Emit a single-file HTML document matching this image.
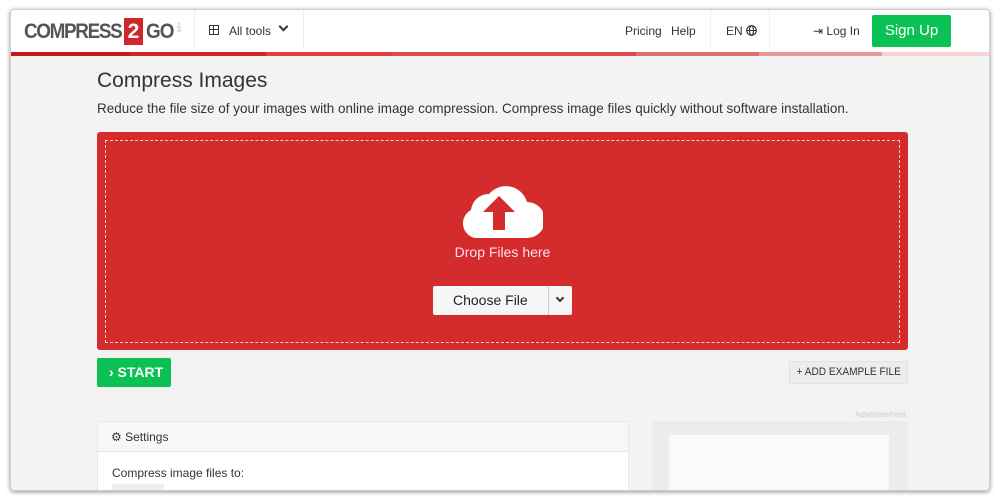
<!DOCTYPE html>
<html><head><meta charset="utf-8"><style>
*{box-sizing:border-box;margin:0;padding:0}
body{width:1000px;height:500px;background:#fff;font-family:"Liberation Sans",sans-serif;position:relative;overflow:hidden}
.win{position:absolute;left:10px;top:9px;width:980px;height:482px;background:#f3f3f3;border:1px solid #cfcfcf;border-radius:4px;overflow:hidden;box-shadow:0 1px 4px rgba(0,0,0,.45)}
.hdr{position:absolute;left:0;top:0;width:980px;height:42px;background:#fff}
.bar{position:absolute;top:42px;height:4px}
.a{position:absolute;white-space:nowrap}
</style></head><body>
<div class="win">
<div class="hdr">
 <div class="a" style="left:13px;top:10px;font-size:21px;font-weight:bold;color:#555;letter-spacing:-1.5px;transform:scaleX(.9);transform-origin:left">COMPRESS</div>
 <div class="a" style="left:113px;top:8px;width:19px;height:27px;background:#d0282a;color:#fff;font-weight:bold;font-size:21px;text-align:center;line-height:27px">2</div>
 <div class="a" style="left:135px;top:10px;font-size:21px;font-weight:bold;color:#555;letter-spacing:-1px;transform:scaleX(.9);transform-origin:left">GO</div>
 <div class="a" style="left:162px;top:14px;font-size:5px;color:#aaa;transform:rotate(90deg)">.com</div>
 <div class="a" style="left:183px;top:0;width:1px;height:38px;background:#eee"></div>
 <div class="a" style="left:198px;top:15px;width:10px;height:10px;border:1px solid #333"></div>
 <div class="a" style="left:202px;top:15px;width:1px;height:10px;background:#333"></div>
 <div class="a" style="left:198px;top:19px;width:10px;height:1px;background:#333"></div>
 <div class="a" style="left:218px;top:14px;font-size:12px;color:#333">All tools</div>
 <div class="a" style="left:269px;top:13px;width:7px;height:7px;border-right:2px solid #333;border-bottom:2px solid #333;transform:rotate(45deg)"></div>
 <div class="a" style="left:292px;top:0;width:1px;height:38px;background:#eee"></div>
 <div class="a" style="left:614px;top:14px;font-size:12px;color:#333">Pricing</div>
 <div class="a" style="left:660px;top:14px;font-size:12px;color:#333">Help</div>
 <div class="a" style="left:699px;top:0;width:1px;height:38px;background:#eee"></div>
 <div class="a" style="left:715px;top:14px;font-size:12px;color:#333">EN</div>
 <svg class="a" style="left:735px;top:15px" width="11" height="11" viewBox="0 0 11 11" fill="none" stroke="#333" stroke-width="1.1"><circle cx="5.5" cy="5.5" r="4.8"/><ellipse cx="5.5" cy="5.5" rx="2" ry="4.8"/><path d="M0.7 5.5H10.3"/></svg>
 <div class="a" style="left:758px;top:0;width:1px;height:38px;background:#eee"></div>
 <div class="a" style="left:802px;top:14px;font-size:12px;color:#333">⇥ Log In</div>
 <div class="a" style="left:861px;top:5px;width:79px;height:32px;background:#0cc153;border-radius:2px;color:#fff;font-size:15px;text-align:center;line-height:32px">Sign Up</div>
</div>
<div class="bar" style="left:0;width:120px;background:#c8181c"></div>
<div class="bar" style="left:120px;width:135px;background:#d42226"></div>
<div class="bar" style="left:255px;width:125px;background:#e03e3e"></div>
<div class="bar" style="left:380px;width:245px;background:#e04a4a"></div>
<div class="bar" style="left:625px;width:123px;background:#e07070"></div>
<div class="bar" style="left:748px;width:123px;background:#e89a9a"></div>
<div class="bar" style="left:871px;width:109px;background:#f6d4d4"></div>
<div class="a" style="left:86px;top:59px;font-size:21px;color:#333">Compress Images</div>
<div class="a" style="left:86px;top:90px;font-size:14px;color:#333;transform:scaleX(.962);transform-origin:left">Reduce the file size of your images with online image compression. Compress image files quickly without software installation.</div>
<div class="a" style="left:86px;top:122px;width:811px;height:218px;background:#d42b2d;border-radius:3px">
 <div class="a" style="left:8px;top:8px;width:795px;height:203px;border:1px dashed rgba(255,255,255,.75)"></div>
 <svg class="a" style="left:362px;top:48px" width="84" height="60" viewBox="0 0 84 60">
  <path d="M16 58 A15 15 0 0 1 12 30 A18 18 0 0 1 30 14 A22 22 0 0 1 68 22 A18 18 0 0 1 68 58 Z" fill="#fff"/>
  <path d="M40 16 L56 32 L46 32 L46 50 L34 50 L34 32 L24 32 Z" fill="#d42b2d"/>
 </svg>
 <div class="a" style="left:0;width:811px;text-align:center;top:112px;font-size:14px;color:#fde">Drop Files here</div>
 <div class="a" style="left:336px;top:154px;width:139px;height:29px;background:#f6f6f6;border-radius:2px">
  <div class="a" style="left:20px;top:6px;font-size:14px;color:#222">Choose File</div>
  <div class="a" style="left:115px;top:0;width:1px;height:29px;background:#ccc"></div>
  <div class="a" style="left:124px;top:9px;width:6px;height:6px;border-right:2px solid #333;border-bottom:2px solid #333;transform:rotate(45deg)"></div>
 </div>
</div>
<div class="a" style="left:86px;top:348px;width:74px;height:29px;background:#0cc153;border-radius:2px;color:#fff;font-size:14px;font-weight:bold;line-height:29px;padding-left:12px">› START</div>
<div class="a" style="left:778px;top:351px;width:119px;height:23px;background:#ececec;border:1px solid #e2e2e2;font-size:11px;color:#333;line-height:21px;text-align:center"><span style="display:inline-block;transform:scaleX(.92)">+ ADD EXAMPLE FILE</span></div>
<div class="a" style="left:844px;top:400px;font-size:8px;color:#ccc">Advertisement</div>
<div class="a" style="left:86px;top:411px;width:532px;height:80px;background:#fff;border:1px solid #e6e6e6">
 <div class="a" style="left:0;top:0;width:530px;height:30px;background:#f7f7f7;border-bottom:1px solid #e6e6e6"></div>
 <div class="a" style="left:13px;top:8px;font-size:12px;color:#333">⚙ Settings</div>
 <div class="a" style="left:14px;top:44px;font-size:12px;color:#333">Compress image files to:</div>
 <div class="a" style="left:14px;top:62px;width:52px;height:20px;background:#eee"></div>
</div>
<div class="a" style="left:641px;top:411px;width:256px;height:80px;background:#ececec">
 <div class="a" style="left:17px;top:14px;width:220px;height:70px;background:#fafafa"></div>
</div>
</div>
</body></html>
